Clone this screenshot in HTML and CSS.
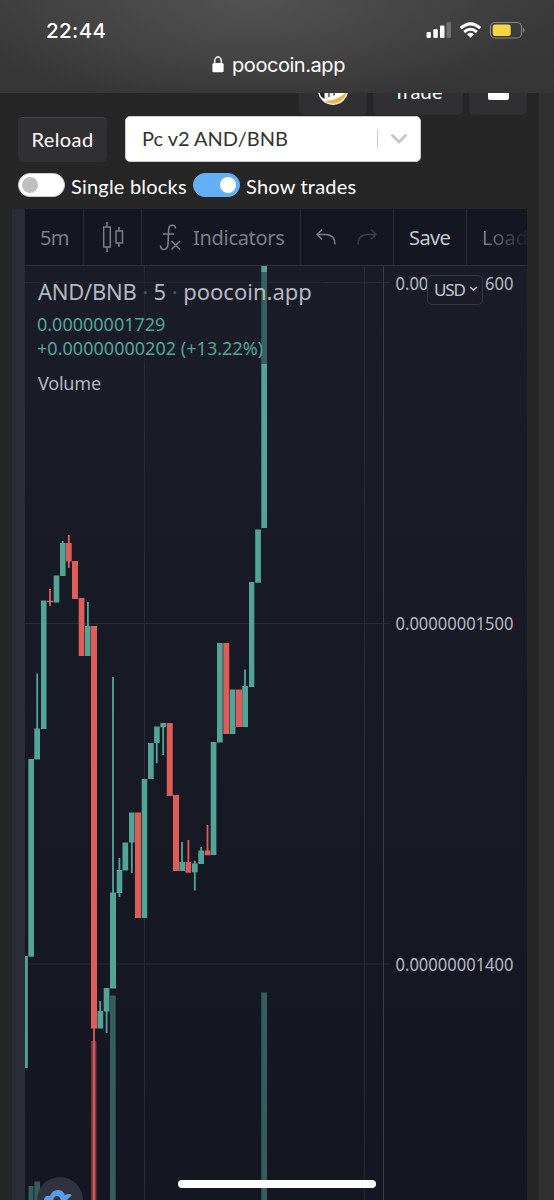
FILE: index.html
```html
<!DOCTYPE html>
<html lang="en">
<head>
<meta charset="utf-8">
<title>poocoin.app</title>
<link rel="stylesheet" href="styles.css">
</head>
<body>
<div class="screen">
  <header class="browser">
    <div class="status">
      <span class="clock">22:44</span>
      <svg class="status-icons" width="100" height="20" viewBox="0 0 100 20">
        <g fill="#fff">
          <rect x="1.500" y="12" width="4.500" height="6" rx="1.300"/>
          <rect x="8.300" y="9" width="4.500" height="9" rx="1.300"/>
          <rect x="15" y="5.500" width="4.500" height="12.500" rx="1.300"/>
          <rect x="21.500" y="2.300" width="4.500" height="15.700" rx="1.300" opacity=".25"/>
        </g>
        <g fill="none" stroke="#fff" stroke-width="3">
          <path d="M35.700 8.200Q45.500 -.5 55.300 8.200"/>
          <path d="M39.200 12Q45.500 6.600 51.800 12"/>
        </g>
        <path d="M42 14.200Q45.500 11.400 49 14.200L45.500 17.800Z" fill="#fff"/>
        <rect x="65.500" y="2.500" width="31" height="15.500" rx="4.500" fill="none" stroke="#858585" stroke-width="1.200"/>
        <rect x="67.700" y="4.500" width="18" height="11.500" rx="2.500" fill="#f7d442"/>
        <path d="M98 7.500q3 2.700 0 5.400z" fill="#858585"/>
      </svg>
    </div>
    <div class="address">
      <svg width="12" height="17" viewBox="0 0 12 17"><path d="M2.700 8V4.700a3.300 3.600 0 0 1 6.600 0V8" fill="none" stroke="#fff" stroke-width="1.500"/><rect x=".4" y="7" width="11.200" height="9.300" rx="1.500" fill="#fff"/></svg>
      <span>poocoin.app</span>
    </div>
  </header>

  <main class="page">
    <nav class="tabs">
      <div class="tab tab-logo">
        <svg width="32" height="32" viewBox="0 0 32 32"><defs><clipPath id="coin"><circle cx="16" cy="16" r="13.700"/></clipPath></defs><circle cx="16" cy="16" r="15" fill="#fff"/><g clip-path="url(#coin)"><path d="M0 0h7.500v25L0 20z" fill="#222"/><path d="M12 12v11M17 12v9.500M22.500 12v7" stroke="#333" stroke-width="1.300"/><path d="M8 27Q23 26 31 16V32H8z" fill="#e5b94b"/></g></svg>
      </div>
      <div class="tab tab-trade">Trade</div>
      <div class="tab tab-menu"><span class="block"></span></div>
    </nav>

    <div class="controls">
      <button class="reload">Reload</button>
      <div class="select">
        <span class="select-value">Pc v2 AND/BNB</span>
        <span class="select-rule"></span>
        <svg width="18" height="12" viewBox="0 0 18 12"><path d="M2.500 2.500L9 9l6.500-6.500" fill="none" stroke="#c8c8c8" stroke-width="3" stroke-linecap="round"/></svg>
      </div>
    </div>

    <div class="switches">
      <span class="toggle"></span><span class="switch-label first">Single blocks</span>
      <span class="toggle on"></span><span class="switch-label">Show trades</span>
    </div>

    <section class="widget">
      <div class="toolbar">
        <div class="tool interval">5m</div>
        <div class="tool candle-type">
          <svg width="22" height="30" viewBox="0 0 22 30" fill="none" stroke="#7b7e89" stroke-width="1.500"><path d="M5 0v5M5 25v5M17 5v4M17 21v4"/><rect x="1.700" y="5" width="6.600" height="20"/><rect x="14" y="9" width="6.500" height="12"/></svg>
        </div>
        <div class="tool indicators">
          <svg width="22" height="27" viewBox="0 0 22 27" fill="none" stroke="#7b7e89" stroke-width="1.600"><path d="M16.500 4.500C16.500 0 10 0 9.700 5L9 20C8.700 27 1.500 27 1.500 21.500M4 10h11M12.500 17l8.500 8.500M21 17l-8.500 8.500"/></svg>
          <span>Indicators</span>
        </div>
        <div class="tool history">
          <svg width="20" height="16" viewBox="0 0 20 16" fill="none" stroke="#7b7e89" stroke-width="1.500"><path d="M6 .7L1 5.500l5 4.800M1 5.500h9Q19 6 19 15.500"/></svg>
          <svg width="20" height="16" viewBox="0 0 20 16" fill="none" stroke="#3b3e49" stroke-width="1.500"><path d="M14 .7l5 4.800-5 4.800M19 5.500h-9Q1 6 1 15.500"/></svg>
        </div>
        <div class="tool save">Save</div>
        <div class="tool load">Load</div>
      </div>

      <div class="chart">
        <svg class="plot" width="502" height="934" viewBox="25 266 502 934">
          <g class="grid">
            <path d="M25 282.500H390M25 623.500H390M25 964H390M144.500 266V1200M364.500 266V1200"/>
            <path class="axis" d="M383.500 266V1200"/>
          </g>
          <g class="up volume">
            <path d="M28.500 1186h5v14h-5zM34.300 1181.500h5.700v18.500h-5.700zM110 995.500h5.700V1200H110zM261.300 992.500h5.700V1200h-5.700z"/>
          </g>
          <path class="down volume" d="M91 1041h5.500v159H91z"/>
          <g class="up">
            <path d="M25 956h2.800v112H25zM28.300 759H34v197.700h-5.700zM34.300 728.500H40v31h-5.700zM41 600.500h5.500V729H41zM53.700 575.500h5.600v27h-5.600zM60 543h5.600v33H60zM85 626h5.500v30H85zM97.500 1011h5.700v17.500h-5.700zM103.700 988h5.700v23.500h-5.700zM110 892.500h6v96h-6zM116.700 870h5.600v23h-5.600zM122.500 842.500h5.700v28h-5.700zM129 812.500h5.500v30H129zM141.700 779h5.500v139h-5.500zM148 743h5.700v36H148zM154.100 726.500h5.600V743h-5.600zM160.400 723h5.700v4.300h-5.700z"/>
            <path d="M179.400 862h5.600v9h-5.600zM192 863.500h5.700v8.700H192zM198.300 850.500h5.700V864h-5.700zM210.700 742h5.700v113h-5.700zM217 643h5.700v99.500H217zM229.700 689.500h5.700V734h-5.700zM242.200 686h5.800v41h-5.800zM249 582h5.300v105H249zM255.200 529.500h5.700v53.300h-5.700zM261.300 266h5.700v262h-5.700z"/>
            <path class="wick" d="M37.200 673.500V730M62.800 541v4M87.900 602v25M100.200 1001v11M106.600 1010v23M113 677v217M119.400 858v39M131.800 841v32M156.800 742v21M163.200 726v29M182 842v21M194.800 861v29.500M201.200 847v5M245 669.500V688"/>
          </g>
          <g class="down">
            <path d="M47 600.700h6v1.500h-6zM66 543h5.700v18.500H66zM72 561h6v38h-6zM78.700 598h5.700v58h-5.700zM91 626h6v402.500h-6zM135 812.500h6V918h-6zM166.800 723h5.900v73h-5.900zM173 795h6v76h-6zM185.600 862h5.600v10.700h-5.600zM204.700 850.500h5.700v4.700h-5.700zM223.300 643h6v91h-6zM236 689.500h6V727h-6z"/>
            <path class="wick" d="M50 589v17M68.800 535v33M94 1028v172M188.400 840v23M207.500 825v26"/>
          </g>
          <g class="price">
            <text x="395.500" y="290" textLength="118" lengthAdjust="spacingAndGlyphs">0.00000001600</text>
            <text x="395.500" y="630" textLength="118" lengthAdjust="spacingAndGlyphs">0.00000001500</text>
            <text x="395.500" y="970.500" textLength="118" lengthAdjust="spacingAndGlyphs">0.00000001400</text>
          </g>
          <circle cx="60" cy="1200" r="23" fill="#2f323f"/>
          <path d="M44 1201q0-6 6-5 2-6 8-6 5 0 7 5 4-2 7 0l-6 6h-5q-1-5-4-5t-4 5z" fill="#579ee8"/>
        </svg>
        <div class="legend">
          <div class="title"><span class="pair">AND/BNB</span><i>·</i><span>5</span><i>·</i><span>poocoin.app</span></div>
          <div class="quote">0.00000001729</div>
          <div class="quote change">+0.00000000202 (+13.22%)</div>
          <div class="study">Volume</div>
        </div>
        <div class="currency"><span>USD</span><svg width="9" height="6" viewBox="0 0 9 6"><path d="M1 1l3.500 3L8 1" fill="none" stroke="#c5c7d0" stroke-width="1.600"/></svg></div>
      </div>
    </section>
  </main>
  <div class="home-indicator"></div>
</div>
</body>
</html>
```
FILE: styles.css
```css
* { box-sizing: border-box; }
body { margin: 0; background: #262626; }
.screen { position: relative; width: 554px; height: 1200px; overflow: hidden; display: flex; flex-direction: column; font-family: Lato, sans-serif; color: #fff; }

.browser { height: 93px; flex: none; background: radial-gradient(ellipse 300px 110px at 250px 0, #525252, rgba(82,82,82,0)), linear-gradient(#3b3b3b, #353536); font-family: Inter, sans-serif; }
.status { display: flex; justify-content: space-between; height: 40px; padding: 20px 29px 0 46px; }
.clock { font-size: 20.5px; line-height: 22px; font-weight: 500; letter-spacing: .4px; }
.address { display: flex; justify-content: center; align-items: center; gap: 8px; height: 24px; margin-top: 13px; padding-left: 3px; font-size: 20px; letter-spacing: -.45px; }
.address svg { margin-top: -1px; }

.page { width: 539px; height: 1107px; padding-left: 12px; background: #262626; box-shadow: 15px 0 0 #303031; }
.tabs { display: flex; justify-content: flex-end; gap: 6px; height: 22px; padding-right: 12px; overflow: hidden; align-items: flex-end; }
.tab { display: flex; justify-content: center; align-items: flex-end; height: 44px; border-radius: 5px; background: #303032; font-size: 20px; }
.tab-logo { width: 68px; padding-bottom: 9px; }
.tab-trade { width: 90px; padding-bottom: 12px; line-height: 24px; letter-spacing: .2px; }
.tab-menu { width: 58px; padding-bottom: 15px; }
.block { width: 21px; height: 20px; border-radius: 2px; background: #fff; }

.controls { display: flex; gap: 18px; padding: 1px 0 0 6px; }
.reload { width: 89px; height: 45px; margin-top: 1px; padding: 0 0 2px; border: 0; border-top: 1px solid #464647; border-radius: 5px; background: #303033; color: #fff; font: 20px/42px Lato, sans-serif; letter-spacing: .4px; }
.select { display: flex; align-items: center; width: 296px; height: 46px; padding: 0 12px 0 16px; border: 1px solid #ccc; border-radius: 5px; background: #fff; color: #333; font-size: 20px; }
.select-value { flex: 1; padding-bottom: 2px; }
.select-rule { width: 1px; height: 20px; margin: 0 12px 0 0; background: #ccc; }

.switches { display: flex; align-items: center; height: 47px; padding: 0 0 2px 6px; font-size: 20px; }
.toggle { display: flex; align-items: center; width: 47px; height: 24px; padding: 0 3px; border: 1px solid #ccc; border-radius: 12px; background: #fff; }
.toggle::before { content: ""; width: 16px; height: 16px; border-radius: 50%; background: #bfbfbf; }
.toggle.on { justify-content: flex-end; border-color: #64b0f6; background: #64b0f6; }
.toggle.on::before { background: #fff; }
.switch-label { padding: 3px 0 0 6px; line-height: 24px; letter-spacing: .2px; }
.switch-label.first { width: 128px; }

.widget { width: 515px; height: 991px; padding-left: 13px; background: #2a2d37; font-family: "Noto Sans", sans-serif; }
.toolbar { display: flex; height: 57px; background: #141621; border-bottom: 1.5px solid #2d303b; color: #7b7e89; font-size: 20px; }
.tool { display: flex; align-items: center; flex: none; border-right: 1px solid #2d303b; }
.interval { width: 59px; padding-left: 15px; letter-spacing: -.7px; }
.candle-type { width: 58px; padding-left: 18px; }
.indicators { width: 159px; padding-left: 17px; gap: 12px; }
.indicators span { letter-spacing: -.3px; }
.history { width: 93px; padding-left: 15px; gap: 21px; }
.save { width: 73px; padding-left: 15px; color: #c5c7d0; letter-spacing: -.6px; }
.load { width: 60px; padding-left: 15px; border-right: 0; background: linear-gradient(90deg, #7b7e89 30%, #20232e 98%); -webkit-background-clip: text; background-clip: text; color: transparent; }

.chart { position: relative; height: 934px; background: linear-gradient(#1a1d28, #141621); }
.plot { display: block; }
.grid path { fill: none; stroke: #292c36; stroke-width: 1; }
.grid .axis { stroke: #3b3e49; }
.up { fill: #53a497; stroke: #53a497; stroke-width: 0; }
.down { fill: #df5d59; stroke: #df5d59; stroke-width: 0; }
.up .wick, .down .wick { fill: none; stroke-width: 1.8; }
.volume { opacity: .5; }
.price { fill: #b5b7c1; font-size: 18px; }

.legend { position: absolute; left: 8px; top: 6px; padding: 2px 0 0 4px; width: 290px; height: 130px; white-space: nowrap; color: #b5b7c1; background: linear-gradient(rgba(26,29,40,.5), rgba(26,29,40,.5)) 0 0 / 100% 92px no-repeat; }
.title { display: flex; height: 38px; line-height: 34px; font-size: 22px; padding-left: 1px; }
.title .pair { letter-spacing: -.25px; }
.title i { width: 17px; text-align: center; font-style: normal; color: #50535e; }
.quote { height: 24px; line-height: 24px; font-size: 18px; color: #53a497; letter-spacing: 0; }
.change { letter-spacing: .03px; }
.study { margin-top: 11px; padding-left: 1px; line-height: 24px; font-size: 18px; letter-spacing: -.2px; }
.currency { position: absolute; left: 402px; top: 9px; display: flex; align-items: center; gap: 5px; width: 56px; height: 30px; padding: 0 0 2px 6px; border: 1.5px solid #363944; border-radius: 5px; background: #1a1d28; color: #c5c7d0; font-size: 17px; }
.currency span { width: 30px; letter-spacing: -1.1px; }

.home-indicator { position: absolute; left: 178px; top: 1180px; width: 198px; height: 8px; border-radius: 4px; background: #fff; }
```
